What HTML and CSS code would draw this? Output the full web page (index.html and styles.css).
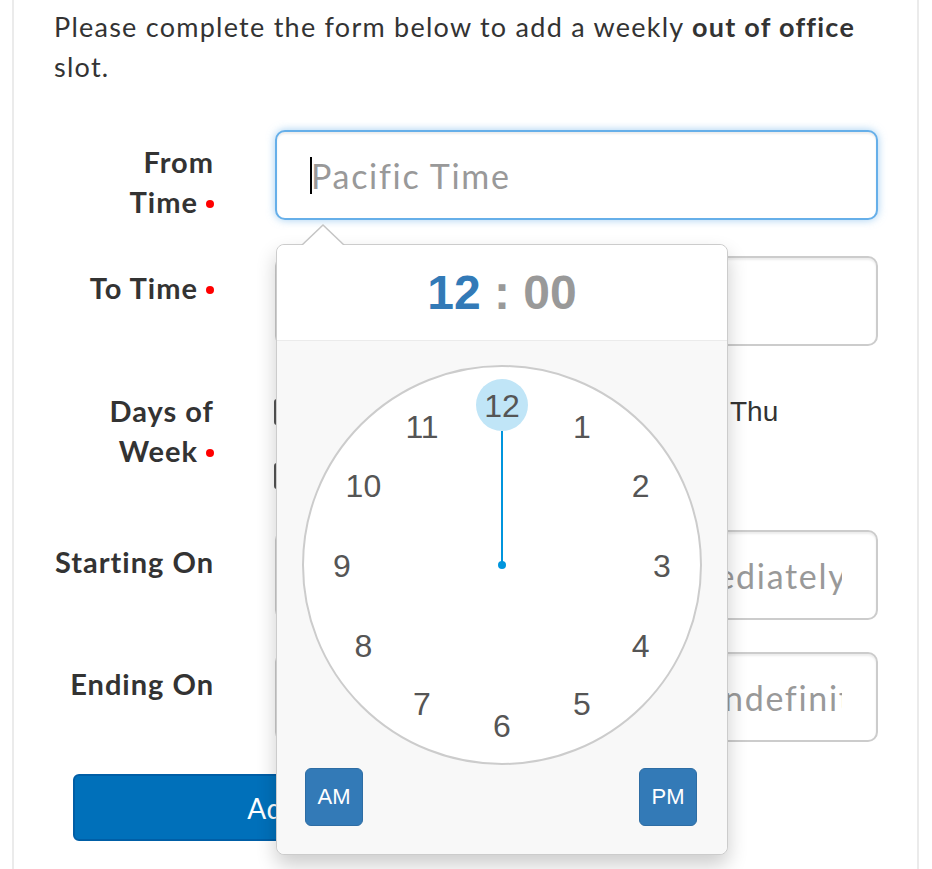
FILE: index.html
```html
<!DOCTYPE html>
<html lang="en">
<head>
<meta charset="utf-8">
<title>Out of office slot</title>
<link rel="stylesheet" href="styles.css">
</head>
<body>
<div class="page">
  <p class="intro">Please complete the form below to add a weekly <strong>out of office</strong> slot.</p>
  <form class="form">
    <div class="row">
      <label class="lbl">From<br>Time<span class="req"></span></label>
      <div class="cell">
        <input class="field focused" type="text" placeholder="Pacific Time">
        <span class="caret"></span>
        <div class="popover">
          <div class="cp-title"><span class="hours">12</span> : <span class="mins">00</span></div>
          <div class="cp-content">
            <svg class="plate" width="400" height="400" viewBox="0 0 400 400">
              <circle cx="200" cy="200" r="199" fill="#fff" stroke="#cccccc" stroke-width="2"/>
              <circle cx="200" cy="40" r="26" fill="#c0e5f7"/>
              <line x1="200" y1="66" x2="200" y2="200" stroke="#0095dd" stroke-width="2"/>
              <circle cx="200" cy="200" r="4" fill="#0095dd"/>
              <g class="ticks" text-anchor="middle">
                <text x="200" y="51.5">12</text>
                <text x="280" y="72.9">1</text>
                <text x="338.6" y="131.5">2</text>
                <text x="360" y="211.5">3</text>
                <text x="338.6" y="291.5">4</text>
                <text x="280" y="350.1">5</text>
                <text x="200" y="371.5">6</text>
                <text x="120" y="350.1">7</text>
                <text x="61.4" y="291.5">8</text>
                <text x="40" y="211.5">9</text>
                <text x="61.4" y="131.5">10</text>
                <text x="120" y="72.9">11</text>
              </g>
            </svg>
            <div class="ampm">
              <button type="button" class="ampm-btn">AM</button>
              <button type="button" class="ampm-btn">PM</button>
            </div>
          </div>
        </div>
      </div>
    </div>
    <div class="row">
      <label class="lbl">To Time<span class="req"></span></label>
      <div class="cell"><input class="field" type="text"></div>
    </div>
    <div class="row days-row">
      <label class="lbl">Days of<br>Week<span class="req"></span></label>
      <div class="days">
        <label class="day"><span class="cb"></span>Mon</label>
        <label class="day"><span class="cb"></span>Tue</label>
        <label class="day"><span class="cb"></span>Wed</label>
        <label class="day"><span class="cb"></span>Thu</label>
        <label class="day"><span class="cb"></span>Fri</label>
        <label class="day"><span class="cb"></span>Sat</label>
        <label class="day"><span class="cb"></span>Sun</label>
      </div>
    </div>
    <div class="row">
      <label class="lbl">Starting On</label>
      <div class="cell"><input class="field" type="text" placeholder="Leave blank to start immediately"></div>
    </div>
    <div class="row">
      <label class="lbl">Ending On</label>
      <div class="cell"><input class="field" type="text" placeholder="Leave blank to continue indefinitely"></div>
    </div>
    <button type="button" class="add-btn">Add</button>
  </form>
</div>
</body>
</html>
```
FILE: styles.css
```css
html, body {
  margin: 0;
  padding: 0;
  background: #fff;
}
body {
  font-family: Lato, "Open Sans", sans-serif;
  color: #333;
  overflow: hidden;
}
.page {
  margin: 0 13px 0 12px;
  border-left: 2px solid #ebebeb;
  border-right: 2px solid #ebebeb;
  min-height: 869px;
  padding: 7px 20px 0 40px;
  box-sizing: border-box;
}
.intro {
  margin: 0;
  font-size: 27px;
  line-height: 40px;
  letter-spacing: 1.25px;
}
.intro strong {
  font-weight: 700;
}
.form {
  margin-top: 43px;
}
.row {
  display: grid;
  grid-template-columns: 160px 603px;
  column-gap: 61px;
  margin-bottom: 32px;
}
.row:first-child {
  margin-bottom: 34px;
}
.lbl {
  text-align: right;
  font-weight: 700;
  font-size: 29px;
  line-height: 40px;
  padding-top: 12px;
  letter-spacing: 1px;
  white-space: nowrap;
}
.req {
  display: inline-block;
  width: 8px;
  height: 8px;
  border-radius: 50%;
  background: #f00;
  margin-left: 8px;
  vertical-align: middle;
  position: relative;
  top: -2px;
}
.cell {
  position: relative;
}
.field {
  display: block;
  width: 100%;
  height: 90px;
  box-sizing: border-box;
  border: 2px solid #ccc;
  border-radius: 10px;
  padding: 0 34px;
  font-family: Lato, "Open Sans", sans-serif;
  font-size: 34px;
  letter-spacing: 1.7px;
  color: #555;
  background: #fff;
  box-shadow: inset 0 2px 2px rgba(0,0,0,0.075);
  outline: none;
}
.field::placeholder {
  color: #999;
}
.field.focused {
  border-color: #66afe9;
  box-shadow: inset 0 2px 2px rgba(0,0,0,0.075), 0 0 8px rgba(102,175,233,0.6);
}
.caret {
  position: absolute;
  left: 35px;
  top: 27px;
  width: 2px;
  height: 37px;
  background: #000;
}
.days-row .lbl {
  padding-top: 13px;
}
.days {
  display: grid;
  grid-template-columns: repeat(4, 140px);
  row-gap: 28px;
  padding-top: 21px;
  height: 120px;
  box-sizing: border-box;
  margin-left: -1px;
}
.day {
  display: flex;
  align-items: center;
  gap: 10px;
  height: 26px;
  font-family: "Liberation Sans", Arial, sans-serif;
  font-size: 28px;
  color: #333;
}
.cb {
  width: 26px;
  height: 26px;
  box-sizing: border-box;
  border: 2px solid #555;
  border-radius: 3px;
  background: #fff;
  flex: none;
}
.add-btn {
  display: block;
  margin: 0 0 0 19px;
  width: 400px;
  height: 67px;
  background: #0070ba;
  border: 2px solid #005ea6;
  border-radius: 6px;
  color: #fff;
  font-family: Lato, "Open Sans", sans-serif;
  font-size: 28px;
  letter-spacing: 0.5px;
}

/* clock picker popover */
.popover {
  position: absolute;
  top: calc(100% + 22px);
  left: 1px;
  width: 452px;
  box-sizing: border-box;
  border: 1px solid #ccc;
  border-radius: 8px;
  background: #fff;
  box-shadow: 0 10px 20px rgba(0,0,0,0.2);
  z-index: 5;
}
.popover::before,
.popover::after {
  content: "";
  position: absolute;
  width: 0;
  height: 0;
  border-style: solid;
  border-color: transparent;
}
.popover::before {
  top: -21px;
  left: 24px;
  border-width: 0 22px 21px 22px;
  border-bottom-color: #c4c4c4;
}
.popover::after {
  top: -19px;
  left: 25px;
  border-width: 0 21px 20px 21px;
  border-bottom-color: #fff;
}
.cp-title {
  height: 95px;
  line-height: 95px;
  text-align: center;
  font-family: "Liberation Sans", Arial, sans-serif;
  font-weight: 700;
  font-size: 48px;
  color: #999;
  border-bottom: 1px solid #ebebeb;
  border-radius: 8px 8px 0 0;
  background: #fff;
}
.hours {
  color: #337ab7;
}
.cp-content {
  background: #f8f8f8;
  padding: 24px 25px 28px;
  border-radius: 0 0 8px 8px;
}
.plate {
  display: block;
}
.ticks text {
  font-family: "Liberation Sans", Arial, sans-serif;
  font-size: 32px;
  fill: #555;
}
.ampm {
  display: flex;
  justify-content: space-between;
  margin-top: 3px;
  padding: 0 5px 0 3px;
}
.ampm-btn {
  width: 58px;
  height: 58px;
  padding: 0;
  background: #337ab7;
  border: 1px solid #2e6da4;
  border-radius: 6px;
  color: #fff;
  font-family: "Liberation Sans", Arial, sans-serif;
  font-size: 22px;
}
```
